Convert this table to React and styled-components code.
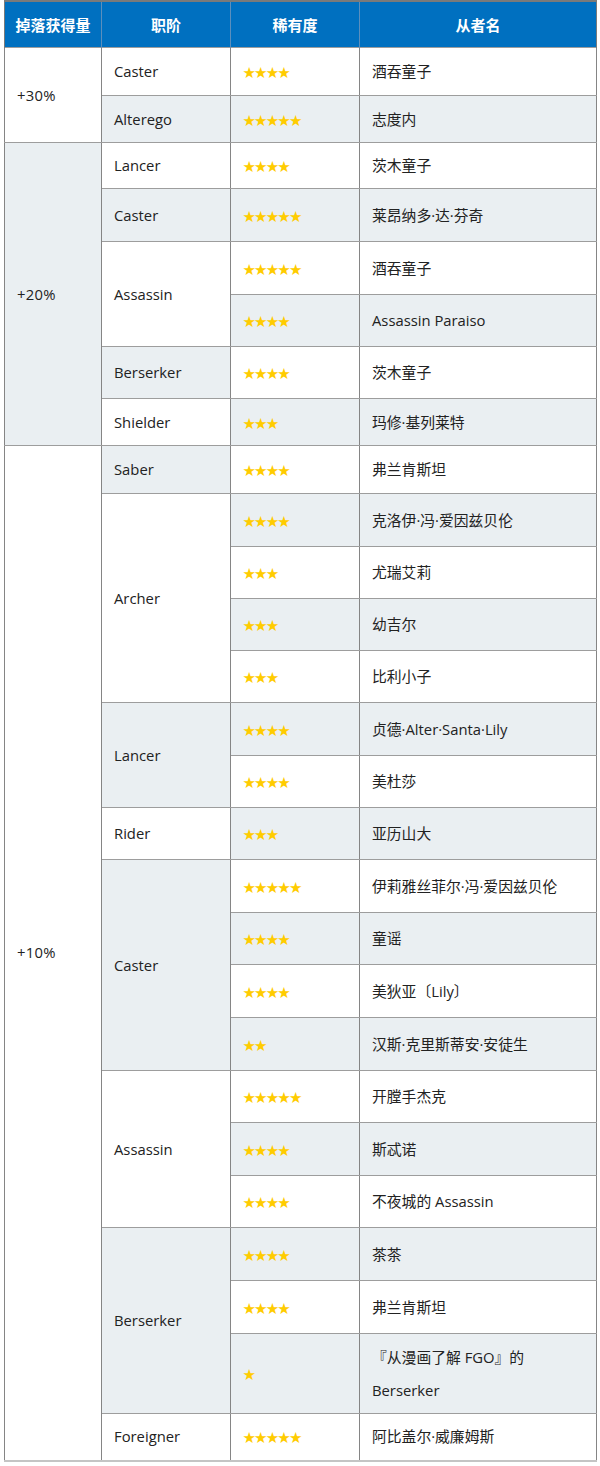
import React from 'react';
import styled, { createGlobalStyle } from 'styled-components';

const GlobalStyle = createGlobalStyle`
  body {
    margin: 0;
    background: #ffffff;
    font-family: "Open Sans", "Noto Sans CJK SC", sans-serif;
  }
`

const Page = styled.div`
  width: 600px;
  padding: 0 4px;
  box-sizing: border-box;
`
const Table = styled.table`
  width: 592px;
  table-layout: fixed;
  border-collapse: collapse;
  border-top: 2px solid #7a7a7a;
  border-bottom: 2px solid #c4c4c4;
  font-size: 14.8px;
  color: #222222;
`
const HeadCell = styled.th`
  height: 45px;
  padding: 0;
  background: #0070c0;
  color: #ffffff;
  font-weight: bold;
  font-size: 15px;
  text-align: center;
  border-left: 1px solid #5c8fbd;
  &:first-child {
    border-left: 1px solid #7a7a7a;
  }
  &:last-child {
    border-right: 1px solid #7a7a7a;
  }
`
const Row = styled.tr`
  height: ${p => p.$h}px;
`
const Cell = styled.td`
  padding: 0 0 0 12px;
  vertical-align: middle;
  background: ${p => (p.$shade ? '#eaeff2' : '#ffffff')};
  border: 1px solid #9d9d9d;
  border-left-color: #858585;
  border-right-color: #858585;
  line-height: 33px;
  white-space: nowrap;
`
const Bonus = styled.span`
  letter-spacing: 0.3px;
`
const Stars = styled.span`
  color: #ffcc00;
  font-family: "Noto Sans CJK SC", sans-serif;
  font-size: 12.5px;
  letter-spacing: -0.9px;
`

const data = [
  {
    bonus: '+30%',
    classes: [
      { name: 'Caster', servants: [[4, '酒吞童子', 48]] },
      { name: 'Alterego', servants: [[5, '志度内', 47]] },
    ],
  },
  {
    bonus: '+20%',
    classes: [
      { name: 'Lancer', servants: [[4, '茨木童子', 46]] },
      { name: 'Caster', servants: [[5, '莱昂纳多·达·芬奇', 53]] },
      { name: 'Assassin', servants: [[5, '酒吞童子', 53], [4, 'Assassin Paraiso', 52]] },
      { name: 'Berserker', servants: [[4, '茨木童子', 52]] },
      { name: 'Shielder', servants: [[3, '玛修·基列莱特', 47]] },
    ],
  },
  {
    bonus: '+10%',
    classes: [
      { name: 'Saber', servants: [[4, '弗兰肯斯坦', 48]] },
      {
        name: 'Archer',
        servants: [[4, '克洛伊·冯·爱因兹贝伦', 53], [3, '尤瑞艾莉', 52], [3, '幼吉尔', 52], [3, '比利小子', 52]],
      },
      { name: 'Lancer', servants: [[4, '贞德·Alter·Santa·Lily', 53], [4, '美杜莎', 52]] },
      { name: 'Rider', servants: [[3, '亚历山大', 52]] },
      {
        name: 'Caster',
        servants: [[5, '伊莉雅丝菲尔·冯·爱因兹贝伦', 53], [4, '童谣', 52], [4, '美狄亚〔Lily〕', 53], [2, '汉斯·克里斯蒂安·安徒生', 53]],
      },
      {
        name: 'Assassin',
        servants: [[5, '开膛手杰克', 52], [4, '斯忒诺', 53], [4, '不夜城的 Assassin', 52]],
      },
      {
        name: 'Berserker',
        servants: [[4, '茶茶', 53], [4, '弗兰肯斯坦', 53], [1, ['『从漫画了解 FGO』的', 'Berserker'], 80]],
      },
      { name: 'Foreigner', servants: [[5, '阿比盖尔·威廉姆斯', 47]] },
    ],
  },
]

function buildRows() {
  const rows = [];
  let classIndex = 0;
  let servantIndex = 0;
  data.forEach((group, groupIndex) => {
    const groupSpan = group.classes.reduce((n, c) => n + c.servants.length, 0);
    group.classes.forEach((cls, ci) => {
      const myClassIndex = classIndex++;
      cls.servants.forEach(([rarity, name, h], si) => {
        const myServantIndex = servantIndex++;
        rows.push(
          <Row key={myServantIndex} $h={h}>
            {ci === 0 && si === 0 && (
              <Cell rowSpan={groupSpan} $shade={groupIndex % 2 === 1}>
                <Bonus>{group.bonus}</Bonus>
              </Cell>
            )}
            {si === 0 && (
              <Cell rowSpan={cls.servants.length} $shade={myClassIndex % 2 === 1}>{cls.name}</Cell>
            )}
            <Cell $shade={myServantIndex % 2 === 1}>
              <Stars>{'★'.repeat(rarity)}</Stars>
            </Cell>
            <Cell $shade={myServantIndex % 2 === 1}>
              {Array.isArray(name) ? name.map((line, i) => <div key={i}>{line}</div>) : name}
            </Cell>
          </Row>
        );
      });
    });
  });
  return rows;
}

export default function App() {
  return (
    <Page>
      <GlobalStyle />
      <Table>
        <colgroup>
          <col style={{ width: 97 }} />
          <col style={{ width: 129 }} />
          <col style={{ width: 129 }} />
          <col style={{ width: 237 }} />
        </colgroup>
        <thead>
          <tr>
            <HeadCell>掉落获得量</HeadCell>
            <HeadCell>职阶</HeadCell>
            <HeadCell>稀有度</HeadCell>
            <HeadCell>从者名</HeadCell>
          </tr>
        </thead>
        <tbody>{buildRows()}</tbody>
      </Table>
    </Page>
  );
}
